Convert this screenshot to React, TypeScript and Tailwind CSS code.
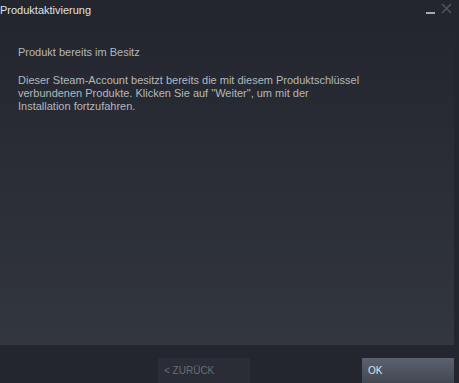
export default function App() {
  return (
    <div
      className="flex h-[383px] w-[459px] flex-col overflow-hidden bg-[#23262e] text-[11px]"
      style={{ fontFamily: '"Liberation Sans", Arial, sans-serif' }}
    >
      <div className="flex h-[20px] items-start justify-between">
        <span className="pt-[3px] leading-[14px] text-[#dfe3e6]">Produktaktivierung</span>
        <div className="flex items-start gap-[6px] pr-[7px]">
          <div className="mt-[12px] h-[2px] w-[9px] bg-[#a8abae]" />
          <svg width="11" height="11" viewBox="0 0 11 11" className="mt-[3px]">
            <path d="M1 1L10 10M10 1L1 10" stroke="#4f535a" strokeWidth="1.6" />
          </svg>
        </div>
      </div>
      <div className="mr-[5px] flex h-[325px] flex-col bg-gradient-to-b from-[#23262e] to-[#32363e] px-[18px] pt-[26px] text-[#b4b8bc]">
        <p className="leading-[13px]">Produkt bereits im Besitz</p>
        <p className="mt-[15px] leading-[13px]">
          Dieser Steam-Account besitzt bereits die mit diesem Produktschlüssel
          <br />
          verbundenen Produkte. Klicken Sie auf "Weiter", um mit der
          <br />
          Installation fortzufahren.
        </p>
      </div>
      <div className="flex flex-1 items-end justify-between pl-[158px] pr-[5px]">
        <div className="flex h-[25px] w-[92px] items-center bg-[#2a2d35] pl-[6px] text-[10px] text-[#686d76]">
          &lt; ZURÜCK
        </div>
        <div className="flex h-[25px] w-[92px] items-center bg-gradient-to-b from-[#5b6170] to-[#424752] pl-[6px] text-[10px] text-[#dfe3e6]">
          OK
        </div>
      </div>
    </div>
  );
}
